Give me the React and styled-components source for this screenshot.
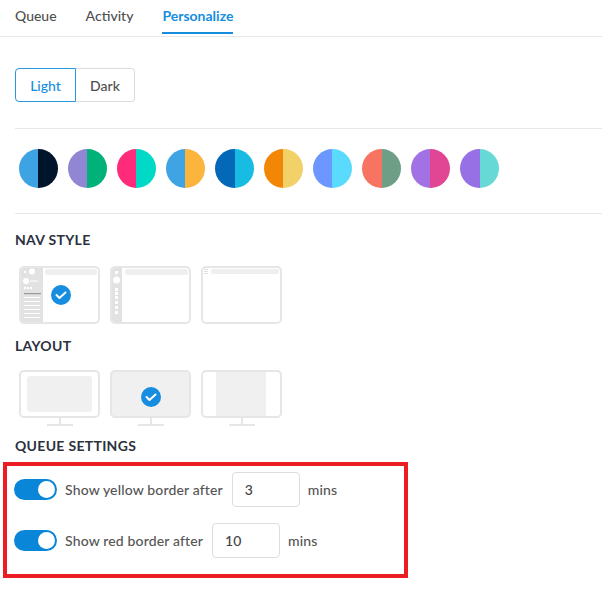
import React, { useState } from 'react'
import styled, { createGlobalStyle } from 'styled-components'

const GlobalStyle = createGlobalStyle`
  html, body {
    margin: 0;
    padding: 0;
    background: #fff;
  }
  body {
    font-family: 'Lato', 'Noto Sans', sans-serif;
    color: #4a4a4a;
  }
`

const Page = styled.div`
  width: 602px;
  height: 593px;
  overflow: hidden;
  background: #fff;
`

const Tabs = styled.div`
  display: flex;
  gap: 29px;
  padding-left: 15px;
  height: 36px;
  border-bottom: 1px solid #e8e8e8;
`

const Tab = styled.div`
  display: flex;
  align-items: center;
  height: 34px;
  padding-bottom: 2px;
  box-sizing: border-box;
  font-size: 14px;
  font-weight: ${p => (p.active ? 700 : 500)};
  color: ${p => (p.active ? '#168ddf' : '#4f4f4f')};
  border-bottom: 2px solid ${p => (p.active ? '#168ddf' : 'transparent')};
`

const Body = styled.div`
  padding-left: 15px;
`

const Block = styled.div`
  display: flex;
  align-items: center;
  gap: ${p => p.gap || 0}px;
  padding: ${p => p.pad || '0'};
  border-bottom: ${p => (p.divided ? '1px solid #e8e8e8' : 'none')};
`

const Segment = styled.button`
  height: 34px;
  padding: 0 14px;
  font-family: inherit;
  font-size: 14px;
  font-weight: 500;
  background: #fff;
  color: ${p => (p.active ? '#168ddf' : '#4f4f4f')};
  border: 1px solid ${p => (p.active ? '#2a96e0' : '#dcdcdc')};
  border-radius: ${p => (p.first ? '4px 0 0 4px' : '0 4px 4px 0')};
  ${p => (p.first ? '' : 'border-left: none;')}
  width: ${p => p.w}px;
`

const Swatch = styled.div`
  width: 39px;
  height: 39px;
  border-radius: 50%;
  background: linear-gradient(90deg, ${p => p.a} 50%, ${p => p.b} 50%);
`

const Title = styled.div`
  font-size: 14px;
  font-weight: 700;
  letter-spacing: 0.3px;
  color: #2c3140;
  margin: ${p => p.m};
`

const ThumbRow = styled.div`
  display: flex;
  gap: 10px;
  padding-left: 4px;
`

const Thumb = styled.svg`
  display: block;
`

const Settings = styled.div`
  box-sizing: border-box;
  margin-left: -12px;
  margin-top: 8px;
  width: 405px;
  border: 4px solid #ec1c24;
  padding: 6px 0 16px 7px;
  display: flex;
  flex-direction: column;
  gap: 16px;
`

const SettingRow = styled.div`
  display: flex;
  align-items: center;
  font-size: 14px;
  font-weight: 500;
  letter-spacing: 0.15px;
  color: #555;
`

const Switch = styled.div`
  width: 43px;
  height: 21px;
  border-radius: 11px;
  background: #0a86d8;
  position: relative;
  margin-right: 8px;
  &::after {
    content: '';
    position: absolute;
    right: 2px;
    top: 2px;
    width: 17px;
    height: 17px;
    border-radius: 50%;
    background: #fff;
  }
`

const NumInput = styled.input`
  width: 68px;
  height: 35px;
  box-sizing: border-box;
  margin: 0 8px 0 9px;
  padding: 0 12px;
  border: 1px solid #dedede;
  border-radius: 4px;
  font-family: inherit;
  font-size: 14px;
  font-weight: 500;
  color: #444;
  outline: none;
`

const swatches = [
  ['#3ea3e3', '#00152b'],
  ['#9186d3', '#00b27a'],
  ['#fe2a7a', '#00d9c6'],
  ['#3ea4e4', '#fbb43c'],
  ['#0468b8', '#18bce3'],
  ['#f28705', '#f2d169'],
  ['#6b97fe', '#5adbfd'],
  ['#f87462', '#6e9e85'],
  ['#a271e4', '#e14694'],
  ['#9670e4', '#66d9d6'],
]

const Check = ({ cx, cy }) => (
  <g>
    <circle cx={cx} cy={cy} r="10" fill="#168ddf" />
    <path d={`M${cx - 4.5} ${cy} l3 3 l6 -5.5`} stroke="#fff" strokeWidth="2" fill="none" strokeLinecap="round" strokeLinejoin="round" />
  </g>
)

const Frame = () => (
  <rect x="1" y="1" width="79" height="56" rx="4" fill="#fff" stroke="#e6e6e6" strokeWidth="2" />
)

const NavFull = () => (
  <Thumb width="81" height="58">
    <Frame />
    <path d="M2 5 a3 3 0 0 1 3 -3 H24 V56 H5 a3 3 0 0 1 -3 -3 Z" fill="#e2e2e2" />
    <rect x="26" y="3" width="52" height="6" rx="2" fill="#efefef" />
    <rect x="5" y="5" width="2" height="2" fill="#fff" />
    <circle cx="13" cy="5.5" r="3" fill="#fff" />
    <circle cx="7" cy="15" r="3" fill="#fff" />
    <rect x="11" y="14.5" width="8" height="1" fill="#fff" />
    <rect x="5" y="21" width="2" height="2" fill="#fff" />
    <rect x="8" y="21" width="2" height="2" fill="#fff" />
    <rect x="11" y="21" width="2" height="2" fill="#fff" />
    <rect x="5" y="27" width="17" height="1.2" fill="#999" />
    {[31, 35, 39, 43, 47, 51].map(y => (
      <rect key={y} x="5" y={y} width="16" height="1" fill="#fff" />
    ))}
    <Check cx={42} cy={29} />
  </Thumb>
)

const NavMini = () => (
  <Thumb width="81" height="58">
    <Frame />
    <path d="M2 5 a3 3 0 0 1 3 -3 H12 V56 H5 a3 3 0 0 1 -3 -3 Z" fill="#e2e2e2" />
    <rect x="15" y="3" width="63" height="6" rx="2" fill="#efefef" />
    <rect x="5" y="5" width="3" height="3" fill="#fff" />
    <circle cx="6.5" cy="14" r="3.5" fill="#fff" />
    {[22, 26, 30, 35, 40, 45].map(y => (
      <rect key={y} x="5" y={y} width="3" height="3" fill="#fff" />
    ))}
  </Thumb>
)

const NavTop = () => (
  <Thumb width="81" height="58">
    <Frame />
    <rect x="3" y="3" width="4" height="1" fill="#e0e0e0" />
    <rect x="3" y="5" width="4" height="1" fill="#e0e0e0" />
    <rect x="3" y="7" width="4" height="1" fill="#e0e0e0" />
    <rect x="10" y="3" width="68" height="5" rx="2" fill="#efefef" />
  </Thumb>
)

const Monitor = ({ children, fill }) => (
  <Thumb width="81" height="56">
    <rect x="1" y="1" width="79" height="46" rx="4" fill={fill || '#fff'} stroke="#e6e6e6" strokeWidth="2" />
    {children}
    <rect x="40" y="48" width="2" height="6" fill="#e6e6e6" />
    <rect x="28" y="54" width="26" height="2" fill="#e6e6e6" />
  </Thumb>
)

export default function App() {
  const [mode, setMode] = useState('light')
  return (
    <Page>
      <GlobalStyle />
      <Tabs>
        <Tab>Queue</Tab>
        <Tab>Activity</Tab>
        <Tab active>Personalize</Tab>
      </Tabs>
      <Body>
        <Block divided pad="31px 0 26px">
          <Segment first w={61} active={mode === 'light'} onClick={() => setMode('light')}>Light</Segment>
          <Segment w={59} active={mode === 'dark'} onClick={() => setMode('dark')}>Dark</Segment>
        </Block>
        <Block divided gap={10} pad="20px 0 25px 4px">
          {swatches.map(([a, b]) => (
            <Swatch key={a + b} a={a} b={b} />
          ))}
        </Block>
        <Title m="17px 0 18px">NAV STYLE</Title>
        <ThumbRow>
          <NavFull />
          <NavMini />
          <NavTop />
        </ThumbRow>
        <Title m="13px 0 16px">LAYOUT</Title>
        <ThumbRow>
          <Monitor>
            <rect x="8" y="6" width="65" height="36" rx="3" fill="#f0f0f0" />
          </Monitor>
          <Monitor fill="#f0f0f0">
            <Check cx={41} cy={27} />
          </Monitor>
          <Monitor>
            <rect x="15" y="2" width="50" height="44" fill="#f0f0f0" />
          </Monitor>
        </ThumbRow>
        <Title m="11px 0 0">QUEUE SETTINGS</Title>
        <Settings>
          <SettingRow>
            <Switch />
            Show yellow border after
            <NumInput defaultValue="3" />
            mins
          </SettingRow>
          <SettingRow>
            <Switch />
            Show red border after
            <NumInput defaultValue="10" />
            mins
          </SettingRow>
        </Settings>
      </Body>
    </Page>
  )
}
